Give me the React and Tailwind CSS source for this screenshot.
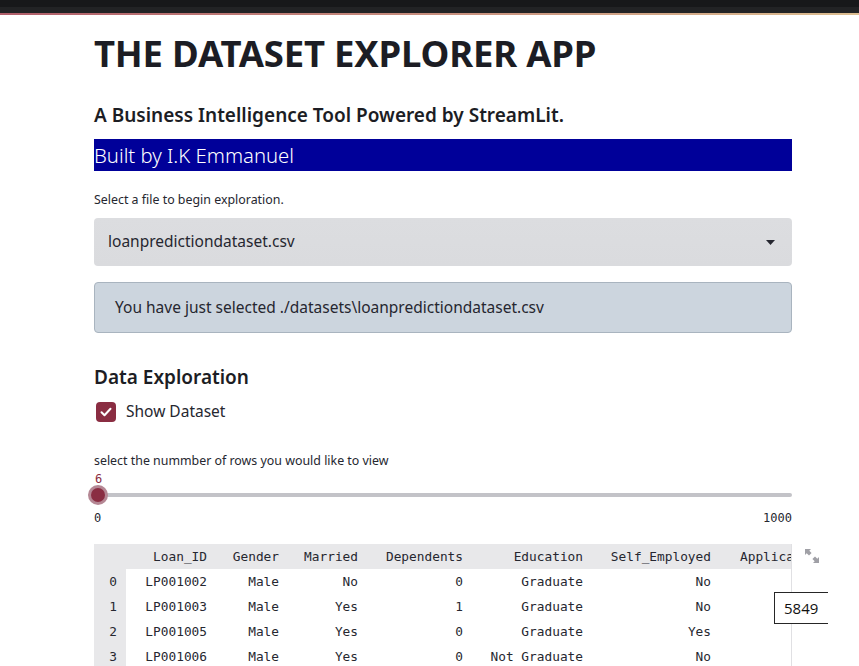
import { useState } from "react";

const columns = [
  { key: "Loan_ID", w: "w-[90px]" },
  { key: "Gender", w: "w-[72px]" },
  { key: "Married", w: "w-[79px]" },
  { key: "Dependents", w: "w-[105px]" },
  { key: "Education", w: "w-[120px]" },
  { key: "Self_Employed", w: "w-[128px]" },
];

const rows = [
  ["LP001002", "Male", "No", "0", "Graduate", "No"],
  ["LP001003", "Male", "Yes", "1", "Graduate", "No"],
  ["LP001005", "Male", "Yes", "0", "Graduate", "Yes"],
  ["LP001006", "Male", "Yes", "0", "Not Graduate", "No"],
];

export default function App() {
  const [file] = useState("loanpredictiondataset.csv");
  const [showData, setShowData] = useState(true);
  const [count] = useState(6);

  return (
    <div className="min-h-[666px] bg-white text-[#262730] font-['Noto_Sans',sans-serif] overflow-hidden">
      {/* top decoration bar */}
      <div className="h-[7px] bg-[#17181a]" />
      <div className="h-[6px] bg-[#222325]" />
      <div className="h-[2px] bg-gradient-to-r from-[#b05e6a] to-[#dbbd90]" />

      <div className="ml-[94px] w-[698px]">
        <h1 className="mt-[14px] text-[36.5px] leading-[48px] font-bold tracking-[-0.2px] text-[#1c1d24]">
          THE DATASET EXPLORER APP
        </h1>
        <h3 className="mt-[25px] text-[19px] leading-[26px] font-semibold text-[#1c1d24]">
          A Business Intelligence Tool Powered by StreamLit.
        </h3>
        <div className="mt-[11px] h-[32px] bg-[#000099] text-white text-[20.3px] leading-[32px] font-light">
          Built by I.K Emmanuel
        </div>

        <p className="mt-[20px] text-[12.4px] leading-[18px]">Select a file to begin exploration.</p>
        <div className="mt-[9px] h-[48px] rounded-[4px] bg-gradient-to-b from-[#dcdde0] to-[#dadbde] flex items-center justify-between pl-[14px] pr-[17px]">
          <span className="text-[15.5px]">{file}</span>
          <svg width="9" height="5" viewBox="0 0 9 5"><path d="M0 0h9L4.5 5z" fill="#262730" /></svg>
        </div>

        <div className="mt-[16px] h-[51px] rounded-[4px] bg-[#ccd5de] border border-[#a9b4bf] flex items-center pl-[20px]">
          <span className="text-[15.5px]">You have just selected ./datasets\loanpredictiondataset.csv</span>
        </div>

        <h4 className="mt-[31px] text-[19px] leading-[26px] font-semibold text-[#1c1d24]">Data Exploration</h4>
        <label className="mt-[10px] flex items-center gap-[10px] cursor-pointer" onClick={() => setShowData(!showData)}>
          <span className="ml-[2px] w-[20px] h-[20px] rounded-[4px] bg-[#8a2d42] flex items-center justify-center">
            <svg width="12" height="10" viewBox="0 0 12 10">
              <path d="M1.5 5.2l3 3 6-6.5" stroke="white" strokeWidth="2" fill="none" strokeLinecap="round" strokeLinejoin="round" />
            </svg>
          </span>
          <span className="text-[15.5px]">Show Dataset</span>
        </label>

        <p className="mt-[29px] text-[12.4px] leading-[18px]">select the nummber of rows you would like to view</p>
        <div className="mt-[2px] font-['DejaVu_Sans_Mono',monospace] text-[12px] leading-[14px] text-[#8a2d42] ml-[1px]">{count}</div>
        <div className="relative mt-[7px] h-[4px] rounded bg-[#c3c3c8]">
          <span className="absolute left-[-6px] top-[-8px] w-[20px] h-[20px] rounded-full bg-[#b58794] flex items-center justify-center">
            <span className="w-[14px] h-[14px] rounded-full bg-[#8a2d42]" />
          </span>
        </div>
        <div className="mt-[14px] flex justify-between font-['DejaVu_Sans_Mono',monospace] text-[12px] leading-[14px] text-[#262730]">
          <span>0</span>
          <span>1000</span>
        </div>

        <div className="relative mt-[19px]">
          <div className="w-[698px] overflow-hidden border-r border-[#e0e0e3] font-['DejaVu_Sans_Mono',monospace] text-[12.8px] text-[#262730]">
            <div className="flex h-[25px] items-center bg-[#e8e8ea] whitespace-nowrap">
              <div className="w-[32px] shrink-0" />
              {columns.map((c) => (
                <div key={c.key} className={`${c.w} shrink-0 text-right pr-[9px]`}>{c.key}</div>
              ))}
              <div className="pl-[20px] shrink-0">ApplicantIncome</div>
            </div>
            {showData &&
              rows.map((r, i) => (
                <div key={i} className="flex h-[25px] items-center whitespace-nowrap">
                  <div className="w-[32px] h-full shrink-0 bg-[#e8e8ea] text-right pr-[9px] leading-[25px]">{i}</div>
                  {r.map((v, j) => (
                    <div key={j} className={`${columns[j].w} shrink-0 text-right pr-[9px]`}>{v}</div>
                  ))}
                </div>
              ))}
          </div>

          {/* expand icon */}
          <svg className="absolute left-[711px] top-[5px]" width="14" height="14" viewBox="0 0 14 14" fill="#a0a0a6">
            <path d="M0 0h6L4.3 1.7 6.6 4 4 6.6 1.7 4.3 0 6z" />
            <path d="M14 14H8l1.7-1.7L7.4 10 10 7.4l2.3 2.3L14 8z" />
          </svg>

          {/* tooltip */}
          <div className="absolute left-[680px] top-[48px] w-[54px] h-[32px] bg-white border-t border-l border-b border-[#262626] flex items-center pl-[9px] font-['Open_Sans',sans-serif] text-[15px] text-[#111]">
            5849
          </div>
        </div>
      </div>
    </div>
  );
}
